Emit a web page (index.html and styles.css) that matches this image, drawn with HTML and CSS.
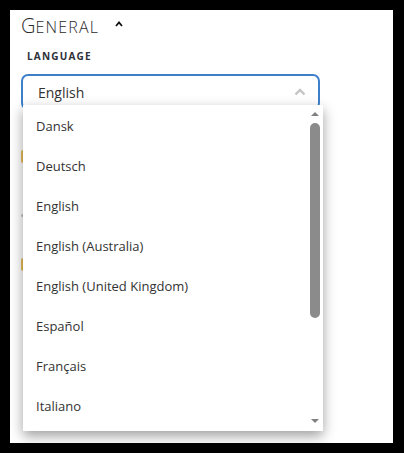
FILE: index.html
```html
<!DOCTYPE html>
<html>
<head>
<meta charset="utf-8">
<link rel="stylesheet" href="styles.css">
</head>
<body>
<div class="panel">
  <div class="section-head">
    <span class="title">G<span class="sc">eneral</span></span>
    <svg class="head-caret" width="8" height="6" viewBox="0 0 8 6"><path d="M1 5 L4 1.5 L7 5" fill="none" stroke="#111" stroke-width="1.8"/></svg>
  </div>
  <div class="field-label">Language</div>
  <div class="select-wrap">
    <div class="select">
      <span class="select-value">English</span>
      <svg class="select-caret" width="12" height="8" viewBox="0 0 12 8"><path d="M1.5 6.5 L6 2 L10.5 6.5" fill="none" stroke="#c4c4c4" stroke-width="2.4"/></svg>
    </div>
    <div class="bg-rows">
      <div class="bg-row"><span class="bg-icon"></span></div>
      <div class="bg-row gray"><span class="bg-icon"></span></div>
      <div class="bg-row"><span class="bg-icon"></span></div>
    </div>
    <div class="listbox">
      <ul class="options">
        <li>Dansk</li>
        <li>Deutsch</li>
        <li>English</li>
        <li>English (Australia)</li>
        <li>English (United Kingdom)</li>
        <li>Español</li>
        <li>Français</li>
        <li>Italiano</li>
      </ul>
      <div class="scrollbar">
        <span class="arrow up"></span>
        <span class="thumb"></span>
        <span class="arrow down"></span>
      </div>
    </div>
  </div>
</div>
</body>
</html>
```
FILE: styles.css
```css
html, body {
  margin: 0;
  padding: 0;
  background: #000;
}
body {
  width: 404px;
  height: 453px;
  overflow: hidden;
  font-family: "Open Sans", "Noto Sans", sans-serif;
  color: #333;
}
.panel {
  margin: 10px 11px 0 10px;
  width: 383px;
  height: 433px;
  background: #fff;
  padding: 3px 0 0 11px;
  box-sizing: border-box;
}
.section-head {
  display: flex;
  align-items: center;
  height: 27px;
}
.title {
  font-size: 20px;
  font-weight: 300;
  color: #2a2a2a;
  line-height: 27px;
}
.title .sc {
  font-size: 16px;
  text-transform: uppercase;
  letter-spacing: 1.2px;
}
.head-caret {
  margin-left: 16px;
  margin-top: -5px;
}
.field-label {
  margin-top: 9px;
  margin-left: 6px;
  font-size: 10px;
  font-weight: 700;
  letter-spacing: 1.2px;
  text-transform: uppercase;
  color: #2e3138;
  line-height: 14px;
}
.select-wrap {
  position: relative;
  margin-top: 11px;
  width: 299px;
}
.select {
  height: 36px;
  box-sizing: border-box;
  border: 2px solid #3d7fc8;
  border-radius: 7px;
  display: flex;
  align-items: center;
  justify-content: space-between;
  padding: 0 12px 0 15px;
}
.select-value {
  font-size: 14px;
  color: #333;
  line-height: 20px;
  margin-top: 1px;
}
.select-caret {
  margin-top: -1px;
}
.bg-rows {
  display: flex;
  flex-direction: column;
  gap: 40px;
  padding-top: 40px;
  padding-bottom: 60px;
}
.bg-row {
  height: 14px;
}
.bg-icon {
  display: block;
  width: 6px;
  height: 13px;
  background: #e8be5a;
  border-radius: 2px;
}
.bg-row.gray .bg-icon {
  background: #c4c4c4;
  height: 3px;
  margin-top: 10px;
}
.listbox {
  position: absolute;
  left: 2px;
  top: 31px;
  width: 300px;
  height: 326px;
  background: #fff;
  box-shadow: 0 5px 12px rgba(0, 0, 0, 0.38);
  overflow: hidden;
}
.options {
  list-style: none;
  margin: 0;
  padding: 1px 0 0 0;
}
.options li {
  height: 40px;
  line-height: 40px;
  padding-left: 13px;
  font-size: 13px;
  color: #333;
}
.scrollbar {
  position: absolute;
  top: 0;
  right: 3px;
  width: 10px;
  height: 100%;
}
.arrow {
  position: absolute;
  left: 1px;
  width: 0;
  height: 0;
  border-left: 4px solid transparent;
  border-right: 4px solid transparent;
}
.arrow.up {
  top: 7px;
  border-bottom: 4px solid #808080;
}
.arrow.down {
  bottom: 8px;
  border-top: 4px solid #808080;
}
.thumb {
  position: absolute;
  top: 18px;
  left: 0;
  width: 10px;
  height: 195px;
  border-radius: 5px;
  background: #8b8b8b;
}
```
